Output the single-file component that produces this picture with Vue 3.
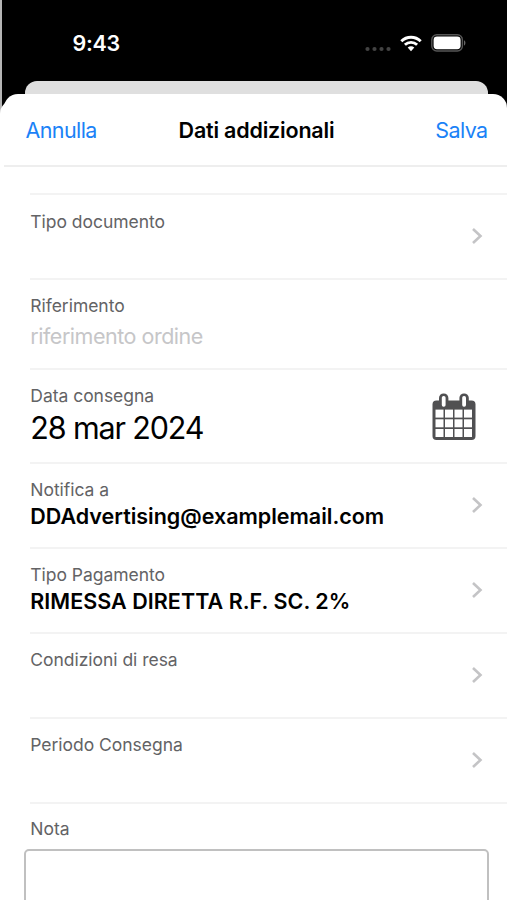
<template>
  <div class="screen">
    <!-- Status bar -->
    <div class="status-bar">
      <span class="time">9:43</span>
      <div class="status-icons">
        <svg class="signal" width="26" height="6" viewBox="0 0 26 6">
          <circle v-for="n in 4" :key="n" :cx="n * 7 - 4.5" cy="3" r="2.1" fill="#434343" />
        </svg>
        <svg class="wifi" width="22" height="17" viewBox="0 0 22 17">
          <g fill="none" stroke="#fff" stroke-width="2.9">
            <path d="M1.3 6.2C6.8 0.9 15.2 0.9 20.7 6.2" />
            <path d="M4.9 9.8C8.4 6.6 13.6 6.6 17.1 9.8" />
          </g>
          <path d="M7.7 12.5C9.6 10.9 12.4 10.9 14.3 12.5L11 16.2Z" fill="#fff" />
        </svg>
        <svg class="battery" width="36" height="18" viewBox="0 0 36 18">
          <rect x="0.8" y="0.8" width="30.6" height="16.2" rx="5" fill="none" stroke="#555" stroke-width="1.4" />
          <rect x="2.6" y="2.6" width="27" height="12.6" rx="3.4" fill="#fff" />
          <path d="M33 6.2C34.9 7 34.9 10.8 33 11.6Z" fill="#666" />
        </svg>
      </div>
    </div>
    <div class="sheet-behind"></div>

    <!-- Modal sheet -->
    <div class="sheet">
      <header class="nav">
        <button class="annulla">Annulla</button>
        <h1>Dati addizionali</h1>
        <button class="salva">Salva</button>
      </header>

      <div class="rows">
        <div v-for="row in rows" :key="row.label" class="row" :class="row.type">
          <div class="text">
            <span class="label">{{ row.label }}</span>
            <span v-if="row.value" class="value">{{ row.value }}</span>
          </div>
          <svg v-if="row.type === 'date'" class="calendar" width="44" height="48" viewBox="0 0 44 48">
            <rect x="0.5" y="7.5" width="43" height="39.5" rx="4" fill="#505052" />
            <rect x="7" y="0.5" width="9.4" height="15" rx="4.5" fill="#505052" />
            <rect x="27.4" y="0.5" width="9.4" height="15" rx="4.5" fill="#505052" />
            <rect x="9.8" y="3" width="3.8" height="10.8" rx="1.7" fill="#fff" />
            <rect x="30.2" y="3" width="3.8" height="10.8" rx="1.7" fill="#fff" />
            <template v-for="r in 3" :key="r">
              <rect
                v-for="c in 4"
                :key="c"
                :x="c * 9.5 - 6"
                :y="r * 9.7 + 6.9"
                width="8"
                height="8"
                fill="#fff"
              />
            </template>
          </svg>
          <svg v-else-if="row.type !== 'input'" class="chevron" width="12" height="18" viewBox="0 0 12 18">
            <path d="M2 2L9.5 9L2 16" fill="none" stroke="#c4c4c6" stroke-width="2.6" />
          </svg>
        </div>
      </div>

      <div class="nota">
        <span class="label">Nota</span>
        <div class="nota-box"></div>
      </div>
    </div>
  </div>
</template>

<script setup>
import { ref } from 'vue'

const rows = ref([
  { label: 'Tipo documento', type: 'first' },
  { label: 'Riferimento', value: 'riferimento ordine', type: 'input' },
  { label: 'Data consegna', value: '28 mar 2024', type: 'date' },
  { label: 'Notifica a', value: 'DDAdvertising@examplemail.com', type: 'email' },
  { label: 'Tipo Pagamento', value: 'RIMESSA DIRETTA R.F. SC. 2%', type: 'payment' },
  { label: 'Condizioni di resa', type: 'select' },
  { label: 'Periodo Consegna', type: 'select' }
])
</script>

<style>
body {
  background: #000;
  overflow: hidden;
}
</style>

<style scoped>
.screen {
  box-sizing: border-box;
  width: 507px;
  height: 900px;
  overflow: hidden;
  display: flex;
  flex-direction: column;
  background: linear-gradient(to right, #b5b5b5 2px, #000 2px);
  font-family: Inter, "Liberation Sans", sans-serif;
}

.status-bar {
  flex: none;
  box-sizing: border-box;
  height: 81px;
  padding: 5px 40px 0 72.5px;
  display: flex;
  align-items: center;
  justify-content: space-between;
  color: #fff;
}

.time {
  font-size: 21.5px;
  font-weight: 600;
  letter-spacing: -0.3px;
}

.status-icons {
  display: flex;
  align-items: center;
}

.signal {
  margin: 11px 9px 0 0;
}

.wifi {
  margin-right: 9px;
}

.sheet-behind {
  flex: none;
  height: 13px;
  margin: 0 19px 0 25px;
  border-radius: 12px 12px 0 0;
  background: #dfdfdf;
}

.sheet {
  flex: 1;
  border-radius: 14px 14px 0 0;
  background: #fff;
  box-shadow: -4px 6px 0 0 #fff;
  margin-left: 4px;
}

.nav {
  box-sizing: border-box;
  height: 73px;
  padding: 0 19.5px 0 21.5px;
  display: grid;
  grid-template-columns: 1fr auto 1fr;
  align-items: center;
  border-bottom: 2px solid #eee;
}

.nav button {
  padding: 0;
  border: 0;
  background: none;
  color: #1a82f7;
  font-family: inherit;
  font-size: 21.5px;
  letter-spacing: -0.6px;
  white-space: nowrap;
}

.annulla {
  justify-self: start;
}

.salva {
  justify-self: end;
}

h1 {
  margin: 0;
  font-size: 21.5px;
  font-weight: 600;
  letter-spacing: -0.2px;
}

.rows {
  margin-top: 26px;
  padding-left: 26px;
}

.row {
  box-sizing: border-box;
  height: 85px;
  padding: 14px 24px 0 0;
  border-top: 2px solid #f3f3f3;
  display: flex;
  justify-content: space-between;
}

.row.first {
  height: 84.5px;
  padding-top: 15px;
}

.text {
  display: flex;
  flex-direction: column;
  padding-left: 0.3px;
}

.label {
  color: #636365;
  font-size: 17.5px;
  letter-spacing: -0.03px;
  line-height: 24px;
}

.value {
  color: #000;
  font-size: 21.5px;
  font-weight: 600;
  line-height: 28px;
  white-space: nowrap;
}

.email .value {
  letter-spacing: -0.02px;
}

.payment .value {
  letter-spacing: 0.04px;
}

.chevron {
  margin-top: 18px;
}

.first .chevron {
  margin-top: 17px;
}

.input {
  height: 90px;
}

.input .value {
  margin-top: 4px;
  color: #c6c6c8;
  font-weight: 400;
  letter-spacing: -0.48px;
}

.date {
  height: 94px;
  padding-right: 31px;
}

.date .value {
  font-size: 30.5px;
  font-weight: 400;
  letter-spacing: -1.15px;
  line-height: 40px;
}

.calendar {
  margin-top: 9px;
}

.nota {
  border-top: 2px solid #f3f3f3;
  margin-left: 26px;
  padding-top: 13px;
}

.nota .label {
  display: block;
  padding-left: 0.3px;
}

.nota-box {
  box-sizing: border-box;
  height: 80px;
  margin: 8.5px 18px 0 -6.5px;
  border: 2px solid #c0c0c0;
  border-radius: 5px;
}
</style>
